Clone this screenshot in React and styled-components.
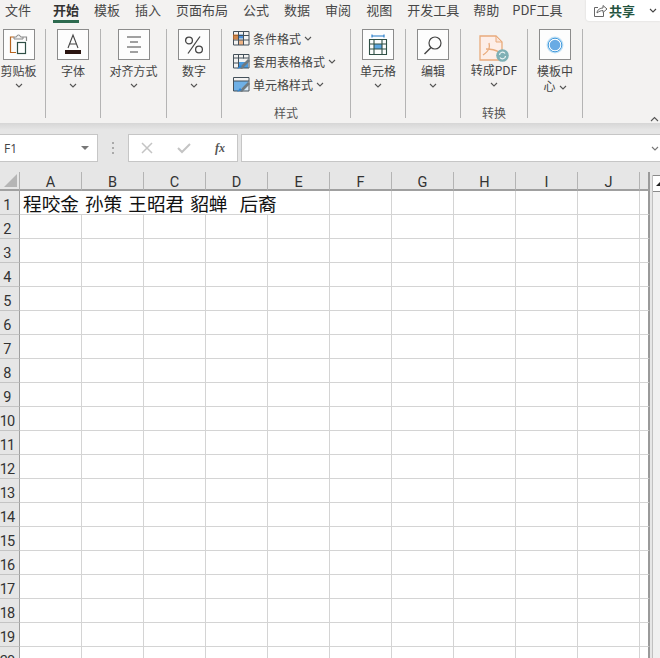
import React from 'react';
import styled, { createGlobalStyle } from 'styled-components';

const Global = createGlobalStyle`
  html, body { margin: 0; padding: 0; overflow: hidden; background: #f3f2f1; }
  body { font-family: "Noto Sans CJK SC", "Liberation Sans", sans-serif; }
`;

const Page = styled.div`
  width: 660px; height: 658px; overflow: hidden; display: flex; flex-direction: column;
`;
const TabBar = styled.div`
  height: 24px; flex: none; display: flex; align-items: flex-start; padding-left: 5px;
  background: #f3f2f1; color: #444;
`;
const Tab = styled.div`
  height: 23px; margin-right: ${p => p.$gap || 15}px; font-size: 13px; line-height: 20px; white-space: nowrap;
  font-weight: ${p => (p.$active ? 700 : 400)};
  color: ${p => (p.$active ? '#333' : '#474747')};
  box-shadow: ${p => (p.$active ? 'inset 0 -3px 0 #2d6a4f' : 'none')};
`;
const Share = styled.div`
  margin-left: auto; width: 74px; height: 21px; flex: none; background: #fff; border-radius: 0 0 0 3px;
  display: flex; align-items: center; padding-left: 7px; box-sizing: border-box;
  box-shadow: 0 0 2px #d0d0d0; color: #24543f; font-size: 13px; font-weight: 700; gap: 1px;
`;
const ShareChevron = styled.span`
  margin-left: 13px; display: flex;
`;
const Ribbon = styled.div`
  height: 99px; flex: none; box-sizing: border-box; padding-top: 5px; margin-left: -8px; width: 668px;
  display: flex; background: #f3f2f1;
`;
const Group = styled.div`
  width: ${p => p.$w}px; height: 89px; flex: none; box-sizing: border-box; border-right: 1px solid #b4b4b4;
  display: flex; flex-direction: column; align-items: center;
`;
const IconBox = styled.div`
  width: 32px; height: 31px; box-sizing: border-box; border: 1px solid #8c8c8c; background: #fdfdfd;
  display: flex; align-items: center; justify-content: center; flex: none;
`;
const PlainIcon = styled.div`
  width: 32px; height: 31px; margin-top: 4px; display: flex; align-items: center; justify-content: center; flex: none;
`;
const BigLabel = styled.div`
  margin-top: ${p => p.$top || 3}px; font-size: 12px; line-height: 16px; color: #444; white-space: nowrap; text-align: center;
  display: flex; align-items: center; justify-content: center; gap: 3px;
`;
const WrapLabel = styled.div`
  margin-top: 3px; width: 38px; font-size: 12px; line-height: 15px; color: #444; text-align: center;
  svg { margin-left: 3px; vertical-align: 1px; }
`;
const Chevron = styled.div`
  height: 13px; display: flex; align-items: center; justify-content: center;
`;
const Caption = styled.div`
  margin-top: auto; margin-bottom: -3px; font-size: 12px; line-height: 16px; color: #555;
`;
const StyleList = styled.div`
  display: flex; flex-direction: column; align-self: flex-start; padding: 0 0 0 11px; gap: 7px; margin-top: 1px;
`;
const StyleRow = styled.div`
  display: flex; align-items: center; height: 16px; font-size: 12px; color: #444; white-space: nowrap; gap: 3px;
`;
const Collapse = styled.div`
  margin-left: auto; align-self: flex-end; margin-bottom: 1px; margin-right: 1px; display: flex;
`;
const FormulaBand = styled.div`
  height: 49px; flex: none; box-sizing: border-box; padding-top: 11px; display: flex; align-items: flex-start;
  background: linear-gradient(#d6d6d6 0, #e6e6e6 7px);
`;
const NameBox = styled.div`
  width: 99px; height: 28px; margin-left: -1px; box-sizing: border-box; flex: none; background: #fff;
  border: 1px solid #c6c6c6; display: flex; align-items: center; justify-content: space-between;
  padding: 0 8px 0 4px; font: 12px "Open Sans", "Liberation Sans", sans-serif; color: #444;
`;
const Arrow = styled.span`
  width: 0; height: 0; border-left: 4px solid transparent; border-right: 4px solid transparent; border-top: 4px solid #777;
`;
const Grip = styled.div`
  width: 30px; height: 28px; flex: none; display: flex; align-items: center; justify-content: center;
`;
const ButtonsBox = styled.div`
  width: 110px; height: 28px; box-sizing: border-box; flex: none; background: #fff; border: 1px solid #c6c6c6;
  display: flex; align-items: center; padding: 0 12px; justify-content: space-between;
`;
const Fx = styled.span`
  font: italic 700 12px "Liberation Serif", serif; color: #555;
`;
const FormulaInput = styled.div`
  flex: 1; height: 28px; margin-left: 3px; margin-right: -4px; box-sizing: border-box; background: #fff; border: 1px solid #c6c6c6;
  display: flex; align-items: center; justify-content: flex-end; padding-right: 4px;
`;
const Sheet = styled.div`
  flex: 1; min-height: 0; display: flex; background: #e6e6e6;
`;
const Grid = styled.div`
  width: 650px; flex: none; display: grid; align-content: start; background: #fff;
  grid-template-columns: 20px repeat(10, 62px) 10px; grid-auto-rows: 24px; grid-template-rows: 19px;
`;
const Corner = styled.div`
  background: #e6e6e6; border-bottom: 2px solid #a0a0a0; border-right: 1px solid #b0b0b0; box-sizing: border-box;
  position: relative; overflow: hidden;
  &::after {
    content: ""; position: absolute; right: 2px; bottom: 2px; width: 0; height: 0;
    border-left: 13px solid transparent; border-bottom: 13px solid #b5b5b5;
  }
`;
const ColHead = styled.div`
  background: #e6e6e6; box-sizing: border-box; border-bottom: 2px solid #a0a0a0;
  border-right: 1px solid ${p => (p.$stub ? '#9a9a9a' : '#b4b4b4')};
  border-right-width: ${p => (p.$stub ? 2 : 1)}px;
  font: 14.5px/16px Roboto, "Liberation Sans", sans-serif; color: #333; text-align: center; padding-top: 3px;
  overflow: hidden;
`;
const RowHead = styled.div`
  background: #e6e6e6; box-sizing: border-box; border-right: 1px solid #a0a0a0; border-bottom: 1px solid #c4c4c4;
  font: 14.5px/17px Roboto, "Liberation Sans", sans-serif; letter-spacing: -0.8px; color: #333; text-align: center;
  padding: 6px 5px 0 0; white-space: nowrap; display: flex; justify-content: center; overflow: hidden;
`;
const Cell = styled.div`
  box-sizing: border-box; border-right: 1px solid #d4d4d4; border-bottom: 1px solid #d4d4d4;
  ${p => p.$stub && 'border-right: 2px solid #9a9a9a;'}
`;
const TextCell = styled(Cell)`
  grid-column: span 5; font-size: 18.67px; line-height: 23px; color: #111; padding-left: 3px; white-space: pre;
  font-weight: 400; word-spacing: 1.8px;
`;
const ScrollTrack = styled.div`
  flex: 1; box-sizing: border-box; margin-left: 2px; margin-top: 3px; background: #f0f0f0;
  border-left: 1px solid #c0c0c0; display: flex; flex-direction: column;
`;
const ScrollUp = styled.div`
  height: 15px; flex: none; background: #fff; border-top: 1px solid #8a8a8a; border-bottom: 1px solid #8a8a8a;
  display: flex; align-items: center; padding-left: 3px;
  &::before {
    content: ""; width: 0; height: 0; border-left: 5px solid transparent; border-right: 5px solid transparent; border-bottom: 5px solid #222;
  }
`;

const Chev = ({ c = '#555' }) => (
  <svg width="8" height="5" viewBox="0 0 8 5"><path d="M1 1l3 3 3-3" fill="none" stroke={c} strokeWidth="1.1" /></svg>
);

const ClipIcon = () => (
  <svg width="20" height="22" viewBox="0 0 20 22" fill="none">
    <path d="M5 3H1.5v15.500H7" stroke="#b8651f" strokeWidth="1.2" />
    <path d="M14 3h3.500v4" stroke="#8a8a8a" strokeWidth="1.2" />
    <path d="M5 5V3h2.500a2 2 0 0 1 4 0H14v2z" fill="#f3f3f3" stroke="#888" />
    <rect x="8.500" y="8.500" width="8" height="11" fill="#fff" stroke="#2f4f45" strokeWidth="1.2" />
  </svg>
);
const FontIcon = () => (
  <svg width="24" height="24" viewBox="0 0 24 24" fill="none">
    <path d="M7 15l5-13 5 13M8.500 11h7" stroke="#444" strokeWidth="1.1" />
    <rect x="4" y="17" width="16" height="4" fill="#2a1410" />
  </svg>
);
const AlignIcon = () => (
  <svg width="22" height="20" viewBox="0 0 22 20" stroke="#444" strokeWidth="1.1">
    <path d="M3 3h14M6 8h8M3 13h14M6 18h8" transform="translate(1 -1)" />
  </svg>
);
const PercentIcon = () => (
  <svg width="22" height="22" viewBox="0 0 22 22" fill="none" stroke="#444" strokeWidth="1.3">
    <circle cx="6" cy="6.500" r="3.400" />
    <circle cx="16" cy="15.500" r="3.400" />
    <path d="M17 2.500L5 19.500" />
  </svg>
);
const CondIcon = () => (
  <svg width="17" height="15" viewBox="0 0 17 15" fill="none">
    <rect x="5.500" y="3.500" width="5" height="4" fill="#4a90d9" />
    <rect x="5.500" y="9" width="5" height="5" fill="#eeb384" />
    <path d="M.5.500h15.500v13.500H.5zM5.500.500v13.500M10.500.500v13.500M.5 4.500h15.500M.5 9h15.500" stroke="#44505a" />
    <rect x="0" y="3.500" width="5" height="5" fill="#c66a22" opacity=".8" />
  </svg>
);
const TableIcon = ({ header }) => (
  <svg width="17" height="15" viewBox="0 0 17 15" fill="none">
    {header && <path d="M1 4h14v3L5 14H1z" fill="#6fb0e6" />}
    {header && <path d="M9 14l6-6v6z" fill="#d6e8f6" />}
    {!header && <rect x="6" y="8" width="9" height="6" fill="#4a9be0" />}
    <path d="M.5.500h15.500v13.500H.5zM.5 4h15.500" stroke="#44505a" />
    {!header && <path d="M5.500.500v13.500M10.500.500v4M.5 9h5" stroke="#44505a" />}
    <path d="M6 14l9-9 2 2-8 8z" fill="#707a80" />
    <path d="M4 15l3-4 2 2z" fill="#2d86d6" />
  </svg>
);
const CellsIcon = () => (
  <svg width="22" height="22" viewBox="0 0 22 22" fill="none">
    <path d="M5 2h12M5 .5v3M17 .5v3" stroke="#1f78c8" strokeWidth="1.1" />
    <rect x="7" y="10" width="8" height="5" fill="#5ea6e0" />
    <path d="M2.500 5.500h17v15h-17zM7 5.500v15M15 5.500v15M2.500 10h17M2.500 15h17" stroke="#2f4f45" strokeWidth="1.1" />
  </svg>
);
const SearchIcon = () => (
  <svg width="22" height="22" viewBox="0 0 22 22" fill="none" stroke="#444" strokeWidth="1.2">
    <circle cx="13" cy="9" r="6" />
    <path d="M9 13.500L2.500 20" strokeWidth="1.500" />
  </svg>
);
const PdfIcon = () => (
  <svg width="30" height="28" viewBox="0 0 30 28" fill="none">
    <path d="M1 1h16l6 6v18H1z" fill="#fdeee8" stroke="#e9ab7c" strokeWidth="1.300" />
    <path d="M17 1v6h6z" fill="#fbe3d6" stroke="#e9ab7c" />
    <path d="M10 8c1 4 1 7-6 12M7 14c4 0 8 0 13 3" stroke="#e9ab7c" strokeWidth="1.300" />
    <circle cx="23.500" cy="20.500" r="6.300" fill="#7fb0b5" />
    <path d="M20.500 20a3 3 0 0 1 5.500-1.500M26.500 21a3 3 0 0 1-5.500 1.500" stroke="#eef6f6" strokeWidth="1.200" />
  </svg>
);
const TemplateIcon = () => (
  <svg width="22" height="22" viewBox="0 0 22 22">
    <circle cx="11" cy="11" r="8.500" fill="#c4e2f6" />
    <circle cx="11" cy="11" r="6.800" fill="#fff" stroke="#3f98dc" strokeWidth="1" />
    <circle cx="11" cy="11" r="5.300" fill="#6aabe4" />
  </svg>
);
const ShareIcon = () => (
  <svg width="15" height="15" viewBox="0 0 15 15" fill="none" stroke="#666" strokeWidth="1">
    <path d="M5 4.500H1.500v9h9V9" />
    <path d="M4 10c0-3 3-5 6-5V2.500L14 6l-4 3.500V7.500c-2 0-4 .8-6 2.500z" fill="#fff" />
  </svg>
);

const tabs = [['文件', 22], ['开始', 15, true], ['模板'], ['插入'], ['页面布局'], ['公式'], ['数据'], ['审阅'], ['视图'], ['开发工具', 14], ['帮助', 13], ['PDF工具']];
const cols = ['A', 'B', 'C', 'D', 'E', 'F', 'G', 'H', 'I', 'J'];

const BigGroup = ({ w, label, children }) => (
  <Group $w={w}>
    <IconBox>{children}</IconBox>
    <BigLabel>{label}</BigLabel>
    <Chevron><Chev /></Chevron>
  </Group>
);

export default function App() {
  const rows = Array.from({ length: 20 }, (_, i) => i + 1);
  return (
    <Page>
      <Global />
      <TabBar>
        {tabs.map(([t, g, a]) => <Tab key={t} $gap={g} $active={a}>{t}</Tab>)}
        <Share><ShareIcon />共享<ShareChevron><Chev c="#444" /></ShareChevron></Share>
      </TabBar>
      <Ribbon>
        <BigGroup w={54} label="剪贴板"><ClipIcon /></BigGroup>
        <BigGroup w={55} label="字体"><FontIcon /></BigGroup>
        <BigGroup w={66} label="对齐方式"><AlignIcon /></BigGroup>
        <BigGroup w={55} label="数字"><PercentIcon /></BigGroup>
        <Group $w={129}>
          <StyleList>
            <StyleRow><CondIcon />条件格式<Chev /></StyleRow>
            <StyleRow><TableIcon />套用表格格式<Chev /></StyleRow>
            <StyleRow><TableIcon header />单元格样式<Chev /></StyleRow>
          </StyleList>
          <Caption>样式</Caption>
        </Group>
        <BigGroup w={55} label="单元格"><CellsIcon /></BigGroup>
        <BigGroup w={55} label="编辑"><SearchIcon /></BigGroup>
        <Group $w={67}>
          <PlainIcon><PdfIcon /></PlainIcon>
          <BigLabel $top={-2}>转成PDF</BigLabel>
          <Chevron><Chev /></Chevron>
          <Caption>转换</Caption>
        </Group>
        <Group $w={55}>
          <IconBox><TemplateIcon /></IconBox>
          <WrapLabel>模板中心<Chev /></WrapLabel>
        </Group>
        <Collapse>
          <svg width="9" height="6" viewBox="0 0 9 6"><path d="M1 5l3.500-3.500L8 5" fill="none" stroke="#555" strokeWidth="1.100" /></svg>
        </Collapse>
      </Ribbon>
      <FormulaBand>
        <NameBox>F1<Arrow /></NameBox>
        <Grip>
          <svg width="3" height="12" viewBox="0 0 3 12" fill="#aaa"><rect y="0" width="2" height="2" /><rect y="5" width="2" height="2" /><rect y="10" width="2" height="2" /></svg>
        </Grip>
        <ButtonsBox>
          <svg width="12" height="12" viewBox="0 0 12 12"><path d="M1 1l10 10M11 1L1 11" stroke="#c4c4c4" strokeWidth="1.500" /></svg>
          <svg width="14" height="12" viewBox="0 0 14 12"><path d="M1 6l4 4 8-8" fill="none" stroke="#c4c4c4" strokeWidth="2" /></svg>
          <Fx>fx</Fx>
        </ButtonsBox>
        <FormulaInput><Chev c="#777" /></FormulaInput>
      </FormulaBand>
      <Sheet>
        <Grid>
          <Corner />
          {cols.map(c => <ColHead key={c}>{c}</ColHead>)}
          <ColHead $stub />
          {rows.map(r => (
            <React.Fragment key={r}>
              <RowHead>{r}</RowHead>
              {r === 1
                ? <TextCell>程咬金 孙策 王昭君 貂蝉  后裔</TextCell>
                : cols.slice(0, 5).map(c => <Cell key={c} />)}
              {cols.slice(5).map(c => <Cell key={c} />)}
              <Cell $stub />
            </React.Fragment>
          ))}
        </Grid>
        <ScrollTrack><ScrollUp /></ScrollTrack>
      </Sheet>
    </Page>
  );
}
